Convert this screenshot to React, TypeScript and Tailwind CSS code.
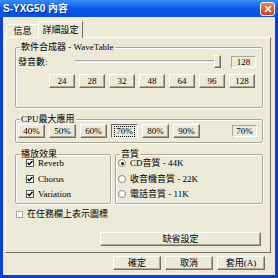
import type { ReactNode } from 'react';

const raised =
  'border border-t-white border-l-white border-r-[#716f64] border-b-[#716f64] shadow-[inset_-1px_-1px_0_#aca899] bg-[#ece9d8]';
const sunken =
  'border border-t-[#aca899] border-l-[#aca899] border-r-white border-b-white bg-[#ece9d8]';
const etched = 'border border-[#aca899] shadow-[1px_1px_0_white,inset_1px_1px_0_white]';

function Group({ title, className, children }: { title: string; className?: string; children: ReactNode }) {
  return (
    <fieldset className={`${etched} rounded-[2px] ${className ?? ''}`}>
      <legend className="ml-[4px] px-[1px] leading-[8px] bg-[#ece9d8]">{title}</legend>
      {children}
    </fieldset>
  );
}

function Btn({ label, className, pressed }: { label: string; className?: string; pressed?: boolean }) {
  return (
    <div
      className={`flex items-center justify-center h-[14px] ${
        pressed
          ? 'border border-t-[#716f64] border-l-[#716f64] border-r-white border-b-white bg-[#ece9d8]'
          : raised
      } ${className ?? ''}`}
    >
      {pressed ? (
        <span className="px-[1px] outline outline-1 outline-dotted outline-black leading-[9px]">{label}</span>
      ) : (
        label
      )}
    </div>
  );
}

function Check({ label }: { label: string }) {
  return (
    <div className="flex items-center h-[10px] gap-[4px]">
      <div className="w-[8px] h-[8px] border border-[#4a5a6a] bg-white flex items-center justify-center">
        <svg width="6" height="6" viewBox="0 0 6 6">
          <path d="M0.5 2.8 L2.2 4.5 L5.5 1" stroke="black" strokeWidth="1.4" fill="none" />
        </svg>
      </div>
      <span>{label}</span>
    </div>
  );
}

function Radio({ label, on }: { label: string; on?: boolean }) {
  return (
    <div className="flex items-center h-[10px] gap-[4px]">
      <div className="w-[8px] h-[8px] rounded-full border border-[#8a8a80] bg-white flex items-center justify-center">
        {on && <div className="w-[3px] h-[3px] rounded-full bg-black" />}
      </div>
      <span>{label}</span>
    </div>
  );
}

export default function App() {
  const voices = ['24', '28', '32', '48', '64', '96', '128'];
  const cpu = ['40%', '50%', '60%', '70%', '80%', '90%'];

  return (
    <div className="w-[278px] h-[278px] flex flex-col bg-[#0b3dd8] overflow-hidden text-black text-[9px] leading-[10px] font-['Liberation_Serif','Noto_Sans_CJK_TC',serif]">
      {/* title bar */}
      <div className="h-[17px] shrink-0 flex items-center justify-between pl-[3px] pr-[3px] bg-gradient-to-b from-[#3a8cf8] via-[#0a5ae6] to-[#0650de]">
        <span className="text-white font-bold text-[10px] font-['Liberation_Sans','Noto_Sans_CJK_TC',sans-serif] [text-shadow:1px_1px_0_#0a2a8a]">
          S-YXG50 內容
        </span>
        <div className="w-[15px] h-[14px] rounded-[3px] border border-white bg-gradient-to-b from-[#e8825f] to-[#c8401a] flex items-center justify-center">
          <svg width="8" height="8" viewBox="0 0 8 8">
            <path d="M1 1 L7 7 M7 1 L1 7" stroke="white" strokeWidth="1.6" />
          </svg>
        </div>
      </div>

      {/* body */}
      <div className="flex-1 mx-[3px] mb-[3px] bg-[#ece9d8] flex flex-col">
        {/* tabs */}
        <div className="flex items-end h-[16px] mt-[4px] ml-[3px] relative z-10">
          <div className="h-[13px] w-[32px] flex items-center justify-center border-t border-l border-t-white border-l-white">
            信息
          </div>
          <div className="h-[17px] -mb-px w-[45px] bg-[#ece9d8] flex items-center justify-center border-t border-l border-r border-t-white border-l-white border-r-[#716f64]">
            詳細設定
          </div>
        </div>

        {/* panel */}
        <div className={`${raised} shadow-none h-[216px] ml-[2px] w-[266px] pt-[5px] pl-[9px] pr-[7px] flex flex-col`}>
          <Group title="軟件合成器 - WaveTable" className="pb-[19px]">
            <div className="mt-[4px] h-[13px] flex items-center pl-[2px]">
              <span className="w-[57px]">發音數:</span>
              <div className="w-[139px] h-[3px] border-t border-t-[#aca899] border-b border-b-white" />
              <div className={`w-[7px] h-[13px] ${raised}`} />
              <div className={`ml-[10px] w-[25px] h-[12px] flex items-center justify-center ${sunken}`}>128</div>
            </div>
            <div className="mt-[6px] flex gap-[4px] pl-[33px]">
              {voices.map((v) => (
                <Btn key={v} label={v} className="w-[26px]" />
              ))}
            </div>
          </Group>

          <Group title="CPU最大應用" className="mt-[7px] pb-[4px]">
            <div className="mt-[1px] flex items-center gap-[4px] pl-[2px] pr-[5px]">
              {cpu.map((c) => (
                <Btn key={c} label={c} pressed={c === '70%'} className="w-[27px]" />
              ))}
              <div className={`ml-auto w-[25px] h-[12px] flex items-center justify-center ${sunken}`}>70%</div>
            </div>
          </Group>

          <div className="mt-[7px] flex gap-[4px]">
            <Group title="播放效果" className="w-[96px] pb-[4px]">
              <div className="flex flex-col pl-[10px]">
                <Check label="Reverb" />
                <div className="mt-[6px]">
                  <Check label="Chorus" />
                </div>
                <div className="mt-[5px]">
                  <Check label="Variation" />
                </div>
              </div>
            </Group>
            <Group title="音質" className="flex-1 pb-[4px]">
              <div className="flex flex-col pl-[2px]">
                <Radio label="CD音質 - 44K" on />
                <div className="mt-[6px]">
                  <Radio label="收音機音質 - 22K" />
                </div>
                <div className="mt-[5px]">
                  <Radio label="電話音質 - 11K" />
                </div>
              </div>
            </Group>
          </div>

          <div className="mt-[5px] pl-[1px] flex items-center h-[10px] gap-[4px]">
            <div className="w-[7px] h-[7px] border border-[#aca899] bg-white" />
            <span>在任務欄上表示圖標</span>
          </div>

          <Btn label="缺省設定" className="mt-[13px] ml-[85px] w-[161px]" />
        </div>

        {/* dialog buttons */}
        <div className="mt-[3px] flex justify-end gap-[4px] pr-[10px]">
          <Btn label="確定" className="w-[48px]" />
          <Btn label="取消" className="w-[48px]" />
          <Btn label="套用(A)" className="w-[48px]" />
        </div>
      </div>
    </div>
  );
}
